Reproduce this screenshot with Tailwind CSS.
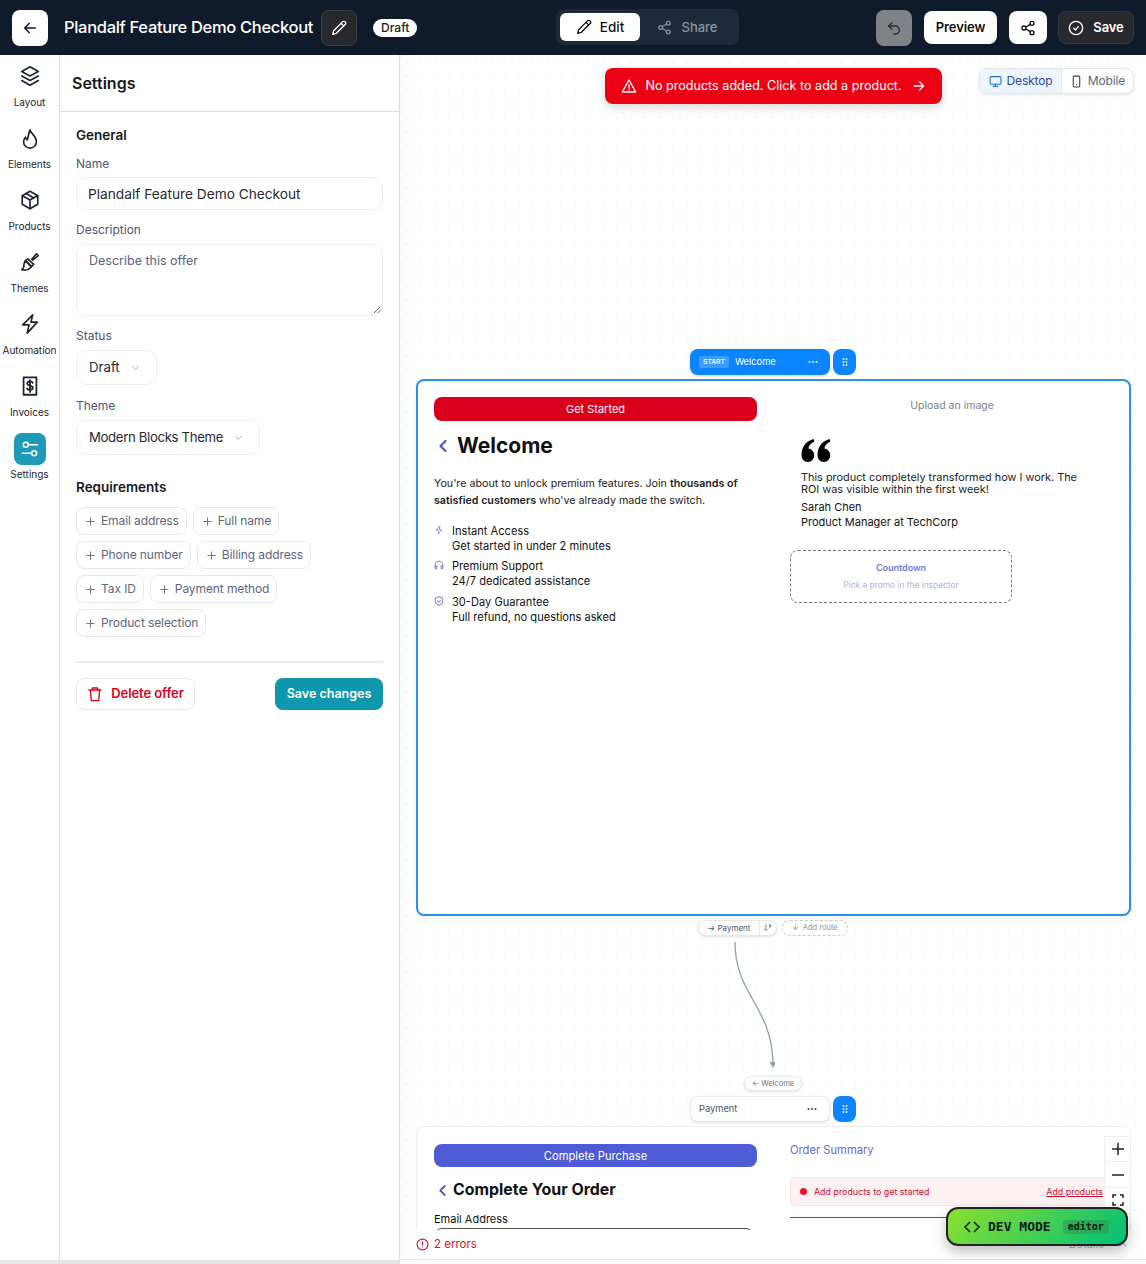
<!DOCTYPE html>
<html><head><meta charset="utf-8"><script src="https://cdn.jsdelivr.net/npm/@tailwindcss/browser@4"></script></head>
<body class="m-0 h-[1264px] w-[1146px] overflow-hidden bg-white font-['Inter',sans-serif] text-[#111827]">
<header class="flex h-[55px] items-center bg-[#0f1a2b] pl-3 pr-3 relative">
  <button class="flex h-9 w-9 items-center justify-center rounded-lg bg-white"><svg class="h-4 w-4" viewBox="0 0 24 24" fill="none" stroke="#0f1a2b" stroke-width="2.2" stroke-linecap="round" stroke-linejoin="round"><path d="M20 12H4M11 5l-7 7 7 7"/></svg></button>
  <span class="ml-4 text-[16.5px] font-medium tracking-[-0.32px] text-white whitespace-nowrap">Plandalf Feature Demo Checkout</span>
  <button class="ml-2 flex h-9 w-9 items-center justify-center rounded-lg border border-[#3a3f48] bg-[#27292d]"><svg class="h-4 w-4" viewBox="0 0 24 24" fill="none" stroke="white" stroke-width="2" stroke-linecap="round" stroke-linejoin="round"><path d="M21.2 6.800a2.800 2.800 0 0 0-4-4L4 16l-1.500 5.500L8 20z"/><path d="M15 5l4 4"/></svg></button>
  <span class="ml-4 rounded-full bg-white px-2 py-px text-[12px] leading-[16px] font-medium text-[#222]">Draft</span>
  <div class="absolute left-[556px] top-[9px] flex h-9 w-[183px] items-center rounded-lg bg-[#1c2a3c] p-1">
    <span class="flex h-7 w-[80px] items-center justify-center gap-2 rounded-md bg-white text-[13.500px] font-medium text-[#111]"><svg class="h-4 w-4" viewBox="0 0 24 24" fill="none" stroke="#111" stroke-width="2" stroke-linecap="round" stroke-linejoin="round"><path d="M21.2 6.800a2.800 2.800 0 0 0-4-4L4 16l-1.500 5.500L8 20z"/><path d="M15 5l4 4"/></svg>Edit</span>
    <span class="flex h-7 flex-1 items-center justify-center gap-[9px] text-[13px] leading-[30px] font-medium text-[#8a93a0]"><svg class="h-[15px] w-[15px]" viewBox="0 0 24 24" fill="none" stroke="#8a93a0" stroke-width="2"><circle cx="18" cy="5" r="3"/><circle cx="6" cy="12" r="3"/><circle cx="18" cy="19" r="3"/><path d="M8.600 13.500l6.800 4M15.400 6.500l-6.800 4"/></svg>Share</span>
  </div>
  <div class="ml-auto flex items-center">
    <button class="flex h-9 w-9 items-center justify-center rounded-lg bg-[#7f8388]"><svg class="h-4 w-4" viewBox="0 0 24 24" fill="none" stroke="#1f2937" stroke-width="2" stroke-linecap="round" stroke-linejoin="round"><path d="M9 14L4 9l5-5"/><path d="M4 9h10a6 6 0 0 1 0 12h-2"/></svg></button>
    <button class="ml-3 flex h-[33px] w-[73px] items-center justify-center rounded-lg bg-white text-[13px] font-semibold tracking-[-0.1px] text-[#111]">Preview</button>
    <button class="ml-3 flex h-[33px] w-[38px] items-center justify-center rounded-lg bg-white"><svg class="h-4 w-4" viewBox="0 0 24 24" fill="none" stroke="#111" stroke-width="2"><circle cx="18" cy="5" r="3"/><circle cx="6" cy="12" r="3"/><circle cx="18" cy="19" r="3"/><path d="M8.600 13.500l6.800 4M15.400 6.500l-6.800 4"/></svg></button>
    <button class="ml-[11px] flex h-[33px] w-[76px] items-center justify-center gap-[9px] rounded-lg border border-[#34383f] bg-[#27292d] text-[13px] font-semibold tracking-[-0.1px] text-white"><svg class="h-4 w-4" viewBox="0 0 24 24" fill="none" stroke="white" stroke-width="2" stroke-linecap="round" stroke-linejoin="round"><circle cx="12" cy="12" r="10"/><path d="M8.500 12.500l2.500 2.500 4.500-5"/></svg>Save</button>
  </div>
</header>
<div class="flex h-[1205px]">
  <nav class="flex w-[60px] shrink-0 flex-col border-r border-[#d5dde9] bg-white text-[#1b2433]">
    <div class="flex h-[62px] flex-col items-center pt-[10px]"><svg class="h-[22px] w-[22px]" viewBox="0 0 24 24" fill="none" stroke="#1b2433" stroke-width="1.800" stroke-linecap="round" stroke-linejoin="round"><path d="M12 2L3 7l9 5 9-5z"/><path d="M3 12l9 5 9-5"/><path d="M3 17l9 5 9-5"/></svg><span class="mt-[8px] text-[10px] leading-[14px] whitespace-nowrap">Layout</span></div>
    <div class="flex h-[62px] flex-col items-center pt-[11px]"><svg class="h-[22px] w-[22px]" viewBox="0 0 24 24" fill="none" stroke="#1b2433" stroke-width="1.800" stroke-linecap="round" stroke-linejoin="round"><path d="M12 2c1 4 7 7 7 13a7 7 0 0 1-14 0c0-2 .8-3.500 2-5 .3 1.500 1 2.500 2 3 1-3 1.500-7 3-11z"/></svg><span class="mt-[7px] text-[10px] leading-[14px] whitespace-nowrap">Elements</span></div>
    <div class="flex h-[62px] flex-col items-center pt-[10px]"><svg class="h-[22px] w-[22px]" viewBox="0 0 24 24" fill="none" stroke="#1b2433" stroke-width="1.800" stroke-linecap="round" stroke-linejoin="round"><path d="M12 2.500l8.500 4.800v9.400L12 21.500l-8.500-4.800V7.300z"/><path d="M3.800 7.300L12 12l8.200-4.700M12 12v9.500M7.700 4.900l8.500 4.900"/></svg><span class="mt-[8px] text-[10px] leading-[14px] whitespace-nowrap">Products</span></div>
    <div class="flex h-[62px] flex-col items-center pt-[10px]"><svg class="h-[22px] w-[22px]" viewBox="0 0 24 24" fill="none" stroke="#1b2433" stroke-width="1.800" stroke-linecap="round" stroke-linejoin="round"><path d="M14 9l5-6 2 2-6 5"/><path d="M9.500 8.500l6.500 6-2.500 2.500-6.500-6.500z"/><path d="M7 10.500l6.500 6.500c-2 3-5 4.500-10.500 3.500 2-1 2.500-4 2.500-6.500z"/></svg><span class="mt-[8px] text-[10px] leading-[14px] whitespace-nowrap">Themes</span></div>
    <div class="flex h-[62px] flex-col items-center pt-[10px]"><svg class="h-[22px] w-[22px]" viewBox="0 0 24 24" fill="none" stroke="#1b2433" stroke-width="1.800" stroke-linecap="round" stroke-linejoin="round"><path d="M15 2L4 13h7l-2 9 11-12h-7z"/></svg><span class="mt-[8px] text-[10px] leading-[14px] whitespace-nowrap">Automation</span></div>
    <div class="flex h-[62px] flex-col items-center pt-[10px]"><svg class="h-[22px] w-[22px]" viewBox="0 0 24 24" fill="none" stroke="#1b2433" stroke-width="2" stroke-linecap="round" stroke-linejoin="round"><path d="M5 2.500h14v19H5z" stroke-dasharray="2 1"/><path d="M15 8.500c-.5-1-1.500-1.500-3-1.500-1.800 0-3 .8-3 2.300 0 3 6 1.700 6 4.700 0 1.500-1.300 2.300-3 2.300-1.500 0-2.700-.6-3.200-1.600M12 5.500v13"/></svg><span class="mt-[8px] text-[10px] leading-[14px] whitespace-nowrap">Invoices</span></div>
    <div class="flex flex-col items-center pt-[6px]"><span class="flex h-8 w-8 items-center justify-center rounded-lg bg-[#1d9ab5]"><svg class="h-5 w-5" viewBox="0 0 24 24" fill="none" stroke="white" stroke-width="1.800" stroke-linecap="round"><circle cx="7" cy="7" r="3"/><circle cx="17" cy="17" r="3"/><path d="M10 7h11M3 17h11"/></svg></span><span class="mt-[2px] text-[10px] leading-[14px] whitespace-nowrap">Settings</span></div>
  </nav>
  <aside class="relative z-10 w-[340px] shrink-0 border-r border-[#d5dde9] bg-white shadow-[3px_0_12px_rgba(0,0,0,0.04)]">
    <div class="flex h-[57px] items-center border-b border-[#d5dde9] pl-3 text-[16px] font-semibold text-[#17181c]">Settings</div>
    <div class="px-4 pt-[14px]">
      <h3 class="text-[13.500px] leading-[18px] font-semibold text-[#17181c]">General</h3>
      <label class="mt-[12px] block text-[12px] leading-[16px] text-[#4d5679]">Name</label>
      <div class="mt-[5px] flex h-[33px] items-center rounded-[10px] border border-[#eceef3] pl-[11px] pt-[1px] text-[13.700px] text-[#27292f] whitespace-nowrap">Plandalf Feature Demo Checkout</div>
      <label class="mt-[12px] block text-[12px] leading-[16px] text-[#4d5679]">Description</label>
      <div class="relative mt-[6px] h-[72px] rounded-[10px] border border-[#eceef3] pl-3 pt-[6px] text-[12.500px] leading-5 text-[#5a6280]">Describe this offer<svg class="absolute bottom-[1px] right-[1px] h-2 w-2" viewBox="0 0 8 8" stroke="#666" fill="none"><path d="M1 7l6-6M4.500 7L7 4.500"/></svg></div>
      <label class="mt-[12px] block text-[12px] leading-[16px] text-[#4d5679]">Status</label>
      <div class="mt-[6px] flex h-[35px] w-[81px] items-center justify-between rounded-[10px] border border-[#eceef3] pl-3 pr-[15px] text-[13.200px] text-[#27292f]">Draft<svg class="h-[11px] w-[11px]" viewBox="0 0 24 24" fill="none" stroke="#9ca3af" stroke-width="2"><path d="M5 9l7 7 7-7"/></svg></div>
      <label class="mt-[13px] block text-[12px] leading-[16px] text-[#4d5679]">Theme</label>
      <div class="mt-[6px] flex h-[35px] w-[184px] items-center justify-between rounded-[10px] border border-[#eceef3] pl-3 pr-[15px] text-[13.200px] tracking-[-0.35px] text-[#27292f] whitespace-nowrap">Modern Blocks Theme<svg class="h-[11px] w-[11px]" viewBox="0 0 24 24" fill="none" stroke="#9ca3af" stroke-width="2"><path d="M5 9l7 7 7-7"/></svg></div>
      <h3 class="mt-[23px] text-[13.500px] leading-[18px] font-semibold text-[#17181c]">Requirements</h3>
      <div class="mt-[11px] flex w-[300px] flex-wrap gap-x-[6px] gap-y-[6px] text-[12px] tracking-[-0.1px] text-[#5e6580]">
        <span class="flex h-7 items-center gap-[6px] rounded-lg border border-[#e3e7f3] pl-[9px] pr-[7px]"><svg class="h-[9px] w-[9px]" viewBox="0 0 10 10" stroke="#5e6580" fill="none"><path d="M5 .5v9M.5 5h9"/></svg>Email address</span>
        <span class="flex h-7 items-center gap-[6px] rounded-lg border border-[#e3e7f3] pl-[9px] pr-[7px]"><svg class="h-[9px] w-[9px]" viewBox="0 0 10 10" stroke="#5e6580" fill="none"><path d="M5 .5v9M.5 5h9"/></svg>Full name</span>
        <span class="flex h-7 items-center gap-[6px] rounded-lg border border-[#e3e7f3] pl-[9px] pr-[7px]"><svg class="h-[9px] w-[9px]" viewBox="0 0 10 10" stroke="#5e6580" fill="none"><path d="M5 .5v9M.5 5h9"/></svg>Phone number</span>
        <span class="flex h-7 items-center gap-[6px] rounded-lg border border-[#e3e7f3] pl-[9px] pr-[7px]"><svg class="h-[9px] w-[9px]" viewBox="0 0 10 10" stroke="#5e6580" fill="none"><path d="M5 .5v9M.5 5h9"/></svg>Billing address</span>
        <span class="flex h-7 items-center gap-[6px] rounded-lg border border-[#e3e7f3] pl-[9px] pr-[7px]"><svg class="h-[9px] w-[9px]" viewBox="0 0 10 10" stroke="#5e6580" fill="none"><path d="M5 .5v9M.5 5h9"/></svg>Tax ID</span>
        <span class="flex h-7 items-center gap-[6px] rounded-lg border border-[#e3e7f3] pl-[9px] pr-[7px]"><svg class="h-[9px] w-[9px]" viewBox="0 0 10 10" stroke="#5e6580" fill="none"><path d="M5 .5v9M.5 5h9"/></svg>Payment method</span>
        <span class="flex h-7 items-center gap-[6px] rounded-lg border border-[#e3e7f3] pl-[9px] pr-[7px]"><svg class="h-[9px] w-[9px]" viewBox="0 0 10 10" stroke="#5e6580" fill="none"><path d="M5 .5v9M.5 5h9"/></svg>Product selection</span>
      </div>
      <div class="mt-[24px] border-t-2 border-[#e7eaf3]"></div>
      <div class="mt-[15px] flex justify-between">
        <button class="flex h-8 w-[119px] items-center justify-center gap-[8px] rounded-lg border border-[#e3e7f3] text-[13px] font-semibold tracking-[-0.1px] text-[#e0001b]"><svg class="h-4 w-4" viewBox="0 0 24 24" fill="none" stroke="#e0001b" stroke-width="2" stroke-linecap="round" stroke-linejoin="round"><path d="M3 6h18M8 6V3h8v3M5 6l1.500 16h11L19 6"/></svg>Delete offer</button>
        <button class="h-8 w-[108px] rounded-lg bg-[#0f97ad] text-[12.500px] font-semibold text-white">Save changes</button>
      </div>
    </div>
  </aside>
  <main class="relative flex-1 overflow-hidden bg-white bg-[radial-gradient(#f4f5f7_1px,transparent_1px)] bg-[size:14px_14px]">
    <div class="absolute left-[205px] top-[13px] flex h-9 w-[337px] items-center justify-center gap-2 rounded-lg bg-[#ec0014] text-[12.600px] text-white shadow-[0_4px_10px_rgba(0,0,0,0.15)]"><svg class="h-4 w-4" viewBox="0 0 24 24" fill="none" stroke="white" stroke-width="2" stroke-linecap="round" stroke-linejoin="round"><path d="M12 3L2 21h20z"/><path d="M12 10v5M12 18v.1"/></svg><span class="whitespace-nowrap">No products added. Click to add a product.</span><svg class="ml-[2px] h-[14px] w-[14px]" viewBox="0 0 24 24" fill="none" stroke="white" stroke-width="2.200" stroke-linecap="round" stroke-linejoin="round"><path d="M4 12h16M13 5l7 7-7 7"/></svg></div>
    <div class="absolute left-[579px] top-[13px] flex h-[26px] w-[155px] items-center overflow-hidden rounded-lg border border-[#dfe6f2] bg-white text-[12px] tracking-[-0.15px] shadow-[0_1px_3px_rgba(0,0,0,0.1)]">
      <span class="flex h-full w-[82px] items-center justify-center gap-[5px] border-r border-[#e3e8f2] bg-[#eff5ff] text-[#2c4aa8]"><svg class="h-[13px] w-[13px]" viewBox="0 0 24 24" fill="none" stroke="#1e6fe0" stroke-width="2" stroke-linecap="round"><rect x="2" y="3" width="20" height="14" rx="2"/><path d="M8 21h8M12 17v4"/></svg>Desktop</span>
      <span class="flex h-full flex-1 items-center justify-center gap-[5px] text-[#5e6580]"><svg class="h-[13px] w-[13px]" viewBox="0 0 24 24" fill="none" stroke="#374151" stroke-width="2"><rect x="6" y="2" width="12" height="20" rx="2"/><path d="M11 18h2"/></svg>Mobile</span>
    </div>

    <div class="absolute left-[290px] top-[294px] flex h-[26px] w-[140px] items-center rounded-lg bg-[#0b84ff] pl-[9px] text-[9.300px] text-white shadow-[0_1px_3px_rgba(0,0,0,0.2)]"><span class="rounded-[2px] bg-[#3c9dff] px-[4px] py-px text-[6.800px] font-medium leading-[10px]">START</span><span class="ml-[6px]">Welcome</span><svg class="absolute right-[12px] h-[10px] w-[10px]" viewBox="0 0 10 10" fill="white"><circle cx="1.500" cy="5" r="1"/><circle cx="5" cy="5" r="1"/><circle cx="8.500" cy="5" r="1"/></svg></div>
    <div class="absolute left-[433px] top-[294px] flex h-[26px] w-[23px] items-center justify-center rounded-lg bg-[#0b84ff]"><svg class="h-[10px] w-[10px]" viewBox="0 0 10 10" fill="white"><circle cx="3.500" cy="2" r=".9"/><circle cx="6.500" cy="2" r=".9"/><circle cx="3.500" cy="5" r=".9"/><circle cx="6.500" cy="5" r=".9"/><circle cx="3.500" cy="8" r=".9"/><circle cx="6.500" cy="8" r=".9"/></svg></div>

    <section class="absolute left-[16px] top-[324px] flex h-[537px] w-[715px] rounded-lg border-2 border-[#2a8fe8] bg-white text-[#111] shadow-[0_4px_10px_rgba(0,0,0,0.04)]">
      <div class="w-[357px] pl-4 pr-[16px] pt-[16px]">
        <div class="flex h-[24px] w-[323px] items-center justify-center rounded-lg bg-[#d9001b] text-[11px] text-white">Get Started</div>
        <div class="mt-[12px] flex items-center"><svg class="ml-[4px] h-[14px] w-[10px]" viewBox="0 0 10 14" fill="none" stroke="#4a5bcb" stroke-width="2.200" stroke-linecap="round" stroke-linejoin="round"><path d="M7.500 2L2.500 7l5 5"/></svg><h1 class="ml-[9px] text-[21px] leading-[26px] font-bold">Welcome</h1></div>
        <p class="mt-[16px] text-[10.700px] leading-[17px] text-[#222]">You're about to unlock premium features. Join <b class="font-semibold">thousands of satisfied customers</b> who've already made the switch.</p>
        <div class="mt-[15px] flex gap-2 text-[11.100px] leading-[15px]"><svg class="mt-[1px] h-[10px] w-[10px] shrink-0" viewBox="0 0 24 24" fill="none" stroke="#7d86de" stroke-width="2" stroke-linejoin="round"><path d="M14 2L5 13h6l-1 9 9-11h-6z"/></svg><span>Instant Access<br>Get started in under 2 minutes</span></div>
        <div class="mt-[5px] flex gap-2 text-[11.100px] leading-[15px]"><svg class="mt-[1px] h-[10px] w-[10px] shrink-0" viewBox="0 0 24 24" fill="none" stroke="#7d86de" stroke-width="2.500" stroke-linecap="round"><path d="M3 18v-6a9 9 0 0 1 18 0v6"/><rect x="3" y="14" width="4" height="7" rx="1"/><rect x="17" y="14" width="4" height="7" rx="1"/></svg><span>Premium Support<br>24/7 dedicated assistance</span></div>
        <div class="mt-[6px] flex gap-2 text-[11.100px] leading-[15px]"><svg class="mt-[1px] h-[10px] w-[10px] shrink-0" viewBox="0 0 24 24" fill="none" stroke="#7d86de" stroke-width="2.500" stroke-linecap="round" stroke-linejoin="round"><path d="M12 2l9 3v7c0 5-4 8-9 10-5-2-9-5-9-10V5z"/><path d="M8 12l3 3 5-5"/></svg><span>30-Day Guarantee<br>Full refund, no questions asked</span></div>
      </div>
      <div class="relative flex-1">
        <p class="pt-[17px] text-center text-[10.500px] leading-[15px] text-[#7c8089]">Upload an image</p>
        <svg class="ml-[26px] mt-[26px] h-[23px] w-[30px]" viewBox="0 0 30 23" fill="#000"><path d="M7 23a6.500 6.500 0 0 1-6.500-7C.5 8 5 2 12.500 0l1 2.500C9.500 4.500 7.500 6.500 7.500 9.500A6.800 6.800 0 0 1 7 23zM23 23a6.500 6.500 0 0 1-6.500-7c0-8 4.500-14 12-16l1 2.500c-4 2-6 4-6 7A6.800 6.800 0 0 1 23 23z"/></svg>
        <p class="ml-[26px] mt-[9px] w-[290px] text-[10.900px] leading-[12px] text-[#222]">This product completely transformed how I work. The ROI was visible within the first week!</p>
        <p class="ml-[26px] mt-[5px] text-[11px] leading-[15px]">Sarah Chen</p>
        <p class="ml-[26px] text-[11px] leading-[15px]">Product Manager at TechCorp</p>
        <div class="ml-[15px] mt-[20px] flex h-[53px] w-[222px] flex-col items-center rounded-lg border border-dashed border-[#777] pt-[11px]"><span class="text-[9px] leading-[12px] font-semibold text-[#6d79d8]">Countdown</span><span class="mt-[5px] text-[8.400px] leading-[12px] text-[#adb2e6]">Pick a promo in the inspector</span></div>
      </div>
    </section>

    <div class="absolute left-[298px] top-[865px] flex h-4 w-[79px] items-center rounded-full border border-[#e5e7eb] bg-white text-[8px] text-[#4b5563] shadow-sm"><span class="flex-1 text-center">→ Payment</span><span class="flex h-full w-[17px] items-center justify-center border-l border-[#e5e7eb]"><svg class="h-[10px] w-[10px]" viewBox="0 0 24 24" fill="none" stroke="#6b7280" stroke-width="2"><path d="M7 3v14M3 14l4 4 4-4M17 3v6l-3 4"/><circle cx="17" cy="6" r="2"/></svg></span></div>
    <div class="absolute left-[382px] top-[865px] flex h-4 w-[66px] items-center justify-center rounded-full border border-dashed border-[#c7ccd4] bg-white text-[7.500px] text-[#8a909a]">↓&nbsp; Add route</div>
    <svg class="absolute left-[325px] top-[885px] h-[130px] w-[50px]" viewBox="0 0 50 130" fill="none"><path d="M10 2C10 55 46 65 48 122" stroke="#8da0b8" stroke-width="1.300"/><path d="M44.500 122h7L48 128z" fill="#8da0b8"/></svg>
    <div class="absolute left-[344px] top-[1021px] flex h-[15px] w-[58px] items-center justify-center rounded-full border border-[#e5e7eb] bg-white text-[7.500px] text-[#6b7280] shadow-sm">← Welcome</div>
    <div class="absolute left-[290px] top-[1041px] flex h-[26px] w-[140px] items-center rounded-lg border border-[#e9ebf0] bg-white pl-[8px] text-[9.300px] text-[#4b5563] shadow-sm">Payment<svg class="absolute right-[12px] h-[10px] w-[10px]" viewBox="0 0 10 10" fill="#374151"><circle cx="1.500" cy="5" r="1"/><circle cx="5" cy="5" r="1"/><circle cx="8.500" cy="5" r="1"/></svg></div>
    <div class="absolute left-[433px] top-[1041px] flex h-[26px] w-[23px] items-center justify-center rounded-lg bg-[#0b84ff]"><svg class="h-[10px] w-[10px]" viewBox="0 0 10 10" fill="white"><circle cx="3.500" cy="2" r=".9"/><circle cx="6.500" cy="2" r=".9"/><circle cx="3.500" cy="5" r=".9"/><circle cx="6.500" cy="5" r=".9"/><circle cx="3.500" cy="8" r=".9"/><circle cx="6.500" cy="8" r=".9"/></svg></div>

    <section class="absolute left-[16px] top-[1071px] flex h-[200px] w-[715px] rounded-lg border border-[#eceef2] bg-white text-[#111]">
      <div class="w-[373px] pl-[17px] pt-[17px]">
        <div class="flex h-[23px] w-[323px] items-center justify-center rounded-lg bg-[#4f5bd5] pt-[1px] text-[11.200px] text-white">Complete Purchase</div>
        <div class="mt-[12px] flex items-center"><svg class="ml-[4px] h-[13px] w-[9px]" viewBox="0 0 10 14" fill="none" stroke="#4a5bcb" stroke-width="2" stroke-linecap="round" stroke-linejoin="round"><path d="M7.500 2L2.500 7l5 5"/></svg><h2 class="ml-[6px] text-[15.900px] leading-[22px] font-bold">Complete Your Order</h2></div>
        <p class="mt-[11px] text-[11px] leading-[15px]">Email Address</p>
        <div class="mt-[1px] h-8 w-[320px] rounded-lg border border-[#555]"></div>
      </div>
      <div class="flex-1 pt-[16px]">
        <p class="text-[11.200px] leading-[15px] text-[#5f6ad6]">Order Summary</p>
        <div class="mt-[19px] flex h-[29px] w-[323px] items-center rounded-[4px] border border-[#fbe3e5] bg-[#fdf1f2] pl-[9px] text-[8.900px] text-[#c8102e]"><span class="h-[7px] w-[7px] rounded-full bg-[#f0102e]"></span><span class="ml-[7px]">Add products to get started</span><span class="ml-auto mr-[9px] underline">Add products</span></div>
        <div class="mt-[11px] w-[330px] border-t border-[#555]"></div>
      </div>
    </section>

    <div class="absolute left-[704px] top-[1081px] flex h-[78px] w-[27px] flex-col border border-[#eceef2] bg-white text-[#111]">
      <span class="flex h-[26px] items-center justify-center border-b border-[#eceef2]"><svg class="h-[14px] w-[14px]" viewBox="0 0 14 14" stroke="#222" stroke-width="1.500" fill="none"><path d="M7 1v12M1 7h12"/></svg></span>
      <span class="flex h-[26px] items-center justify-center border-b border-[#eceef2]"><svg class="h-[14px] w-[14px]" viewBox="0 0 14 14" stroke="#222" stroke-width="1.500" fill="none"><path d="M1 7h12"/></svg></span>
      <span class="flex h-[26px] items-center justify-center"><svg class="h-[12px] w-[12px]" viewBox="0 0 12 12" stroke="#222" stroke-width="1.500" fill="none"><path d="M1 4V1h3M8 1h3v3M11 8v3H8M4 11H1V8"/></svg></span>
    </div>

    <div class="absolute left-0 top-[1175px] flex h-[30px] w-full items-center border-b border-[#e5e7eb] bg-white pl-4 text-[11.500px] text-[#d1122f]"><svg class="mr-[5px] h-[13px] w-[13px]" viewBox="0 0 24 24" fill="none" stroke="#d1122f" stroke-width="2" stroke-linecap="round"><circle cx="12" cy="12" r="10"/><path d="M12 7v6M12 16.500v.1"/></svg>2 errors<span class="ml-auto text-[11px] text-[#b0b4bb]">Details</span><svg class="ml-[14px] mr-[19px] h-[9px] w-[9px]" viewBox="0 0 10 10" fill="none" stroke="#b0b4bb" stroke-width="1.200"><path d="M1 7l4-4 4 4"/></svg></div>
    <div class="absolute left-[546px] top-[1152px] z-10 flex h-[39px] w-[182px] items-center rounded-xl border-2 border-[#222] bg-[linear-gradient(135deg,#8ce02e,#00bf78)] pl-[16px] font-['DejaVu_Sans_Mono',monospace] text-[#0b1a10] shadow-[0_6px_14px_rgba(0,0,0,0.25)]"><svg class="h-[12px] w-[16px]" viewBox="0 0 16 12" fill="none" stroke="#0b1a10" stroke-width="1.500"><path d="M6 1L1 6l5 5M10 1l5 5-5 5"/></svg><span class="ml-2 text-[13px] font-bold">DEV MODE</span><span class="ml-3 rounded-[4px] bg-[#2a9a52]/60 px-[5px] text-[10px] leading-[14px] font-bold">editor</span></div>
  </main>
</div>
<div class="h-1 w-[400px] bg-[#e4e6e8]"></div>
</body></html>
